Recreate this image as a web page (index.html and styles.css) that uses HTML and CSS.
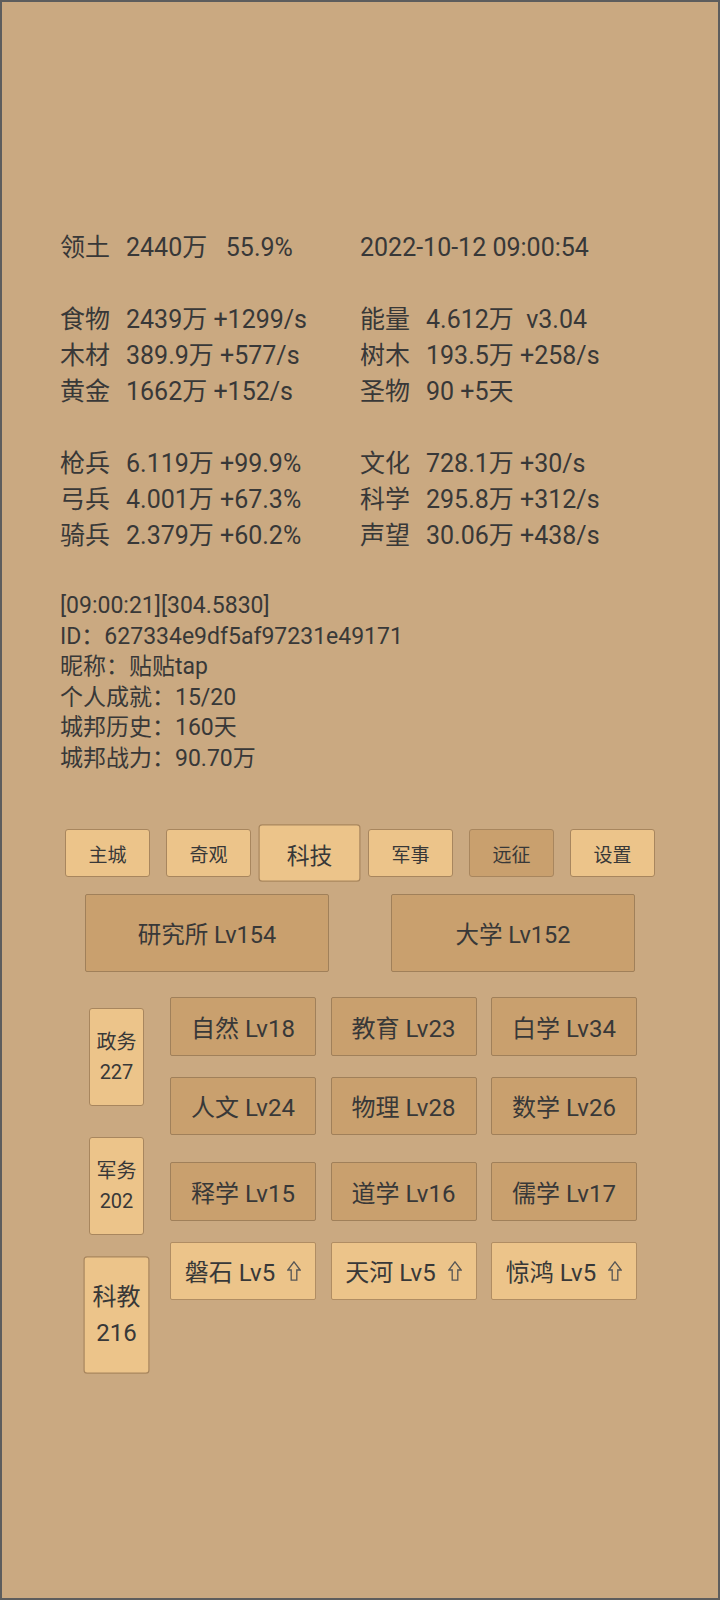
FILE: index.html
```html
<!DOCTYPE html>
<html lang="zh-CN">
<head>
<meta charset="utf-8">
<title>城邦</title>
<link rel="stylesheet" href="styles.css">
</head>
<body>
<section class="stats">
  <div class="cell"><span class="lab">领土</span>2440万   55.9%</div>
  <div class="cell">2022-10-12 09:00:54</div>
  <div class="blank"></div>
  <div class="cell"><span class="lab">食物</span>2439万 +1299/s</div>
  <div class="cell"><span class="lab">能量</span>4.612万  v3.04</div>
  <div class="cell"><span class="lab">木材</span>389.9万 +577/s</div>
  <div class="cell"><span class="lab">树木</span>193.5万 +258/s</div>
  <div class="cell"><span class="lab">黄金</span>1662万 +152/s</div>
  <div class="cell"><span class="lab">圣物</span>90 +5天</div>
  <div class="blank"></div>
  <div class="cell"><span class="lab">枪兵</span>6.119万 +99.9%</div>
  <div class="cell"><span class="lab">文化</span>728.1万 +30/s</div>
  <div class="cell"><span class="lab">弓兵</span>4.001万 +67.3%</div>
  <div class="cell"><span class="lab">科学</span>295.8万 +312/s</div>
  <div class="cell"><span class="lab">骑兵</span>2.379万 +60.2%</div>
  <div class="cell"><span class="lab">声望</span>30.06万 +438/s</div>
</section>

<section class="info">
  <div>[09:00:21][304.5830]</div>
  <div>ID：627334e9df5af97231e49171</div>
  <div>昵称：贴贴tap</div>
  <div>个人成就：15/20</div>
  <div>城邦历史：160天</div>
  <div>城邦战力：90.70万</div>
</section>

<nav class="tabs">
  <div class="tab">主城</div>
  <div class="tab">奇观</div>
  <div class="tab active">科技</div>
  <div class="tab">军事</div>
  <div class="tab dim">远征</div>
  <div class="tab">设置</div>
</nav>

<section class="bigs">
  <div class="big">研究所 Lv154</div>
  <div class="big">大学 Lv152</div>
</section>

<section class="lower">
  <div class="side">
    <div class="sbtn"><span>政务</span><span>227</span></div>
    <div class="sbtn"><span>军务</span><span>202</span></div>
    <div class="sbtn active"><span>科教</span><span>216</span></div>
  </div>
  <div class="tiles">
    <div class="group">
      <div class="tile">自然 Lv18</div>
      <div class="tile">教育 Lv23</div>
      <div class="tile">白学 Lv34</div>
      <div class="tile">人文 Lv24</div>
      <div class="tile">物理 Lv28</div>
      <div class="tile">数学 Lv26</div>
    </div>
    <div class="group">
      <div class="tile">释学 Lv15</div>
      <div class="tile">道学 Lv16</div>
      <div class="tile">儒学 Lv17</div>
      <div class="tile up">磐石 Lv5<svg class="arrow" viewBox="0 0 14 20" width="14" height="20"><path d="M7 0.8 L13.2 9 H9.8 V19.2 H4.2 V9 H0.8 Z"/></svg></div>
      <div class="tile up">天河 Lv5<svg class="arrow" viewBox="0 0 14 20" width="14" height="20"><path d="M7 0.8 L13.2 9 H9.8 V19.2 H4.2 V9 H0.8 Z"/></svg></div>
      <div class="tile up">惊鸿 Lv5<svg class="arrow" viewBox="0 0 14 20" width="14" height="20"><path d="M7 0.8 L13.2 9 H9.8 V19.2 H4.2 V9 H0.8 Z"/></svg></div>
    </div>
  </div>
</section>
</body>
</html>
```

FILE: styles.css
```css
* {
  box-sizing: border-box;
}

html {
  margin: 0;
  background: #caa981;
}

body {
  margin: 0;
  width: 720px;
  height: 1600px;
  overflow: hidden;
  background: #caa981;
  border: 2px solid #5d5d5d;
  font-family: Roboto, "Noto Sans CJK SC", sans-serif;
  color: #383838;
}

.stats {
  display: grid;
  grid-template-columns: 300px auto;
  padding: 228px 0 0 58px;
  font-size: 25px;
  line-height: 36px;
}

.blank {
  grid-column: 1 / -1;
  height: 36px;
}

.cell {
  white-space: pre;
}

.lab {
  display: inline-block;
  width: 66px;
}

.info {
  margin-top: 37px;
  padding-left: 58px;
  font-size: 23px;
  line-height: 30.5px;
}

.tabs {
  display: flex;
  justify-content: center;
  gap: 16px;
  margin-top: 55px;
}

.tab {
  width: 85px;
  height: 48px;
  display: flex;
  align-items: center;
  justify-content: center;
  background: #ecc48a;
  border: 1px solid #a8865e;
  border-radius: 3px;
  font-size: 19px;
}

.tab.active {
  transform: scale(1.2);
}

.tab.dim {
  background: #c9a06e;
}

.bigs {
  display: flex;
  justify-content: center;
  gap: 62px;
  margin-top: 17px;
}

.big {
  width: 244px;
  height: 78px;
  display: flex;
  align-items: center;
  justify-content: center;
  background: #c9a06e;
  border: 1px solid #a0805a;
  border-radius: 2px;
  font-size: 23.5px;
}

.lower {
  display: flex;
  gap: 26px;
  margin-top: 25px;
  padding-left: 87px;
}

.side {
  display: flex;
  flex-direction: column;
  gap: 31px;
  padding-top: 11px;
}

.sbtn {
  width: 55px;
  height: 98px;
  display: flex;
  flex-direction: column;
  align-items: center;
  justify-content: center;
  background: #ecc48a;
  border: 1px solid #a8865e;
  border-radius: 3px;
  font-size: 20px;
  line-height: 30px;
}

.sbtn.active {
  transform: scale(1.2);
}

.tiles {
  display: flex;
  flex-direction: column;
  gap: 27px;
}

.group {
  display: grid;
  grid-template-columns: repeat(3, 146px);
  column-gap: 14.5px;
  row-gap: 21px;
}

.tile {
  height: 58.5px;
  display: flex;
  align-items: center;
  justify-content: center;
  background: #c9a06e;
  border: 1px solid #a0805a;
  border-radius: 2px;
  font-size: 24px;
  white-space: pre;
}

.tile.up {
  background: #ecc48a;
  border-color: #b08d63;
}

.arrow {
  margin-left: 12px;
  fill: none;
  stroke: #555555;
  stroke-width: 1.3;
  stroke-linejoin: miter;
}
```
